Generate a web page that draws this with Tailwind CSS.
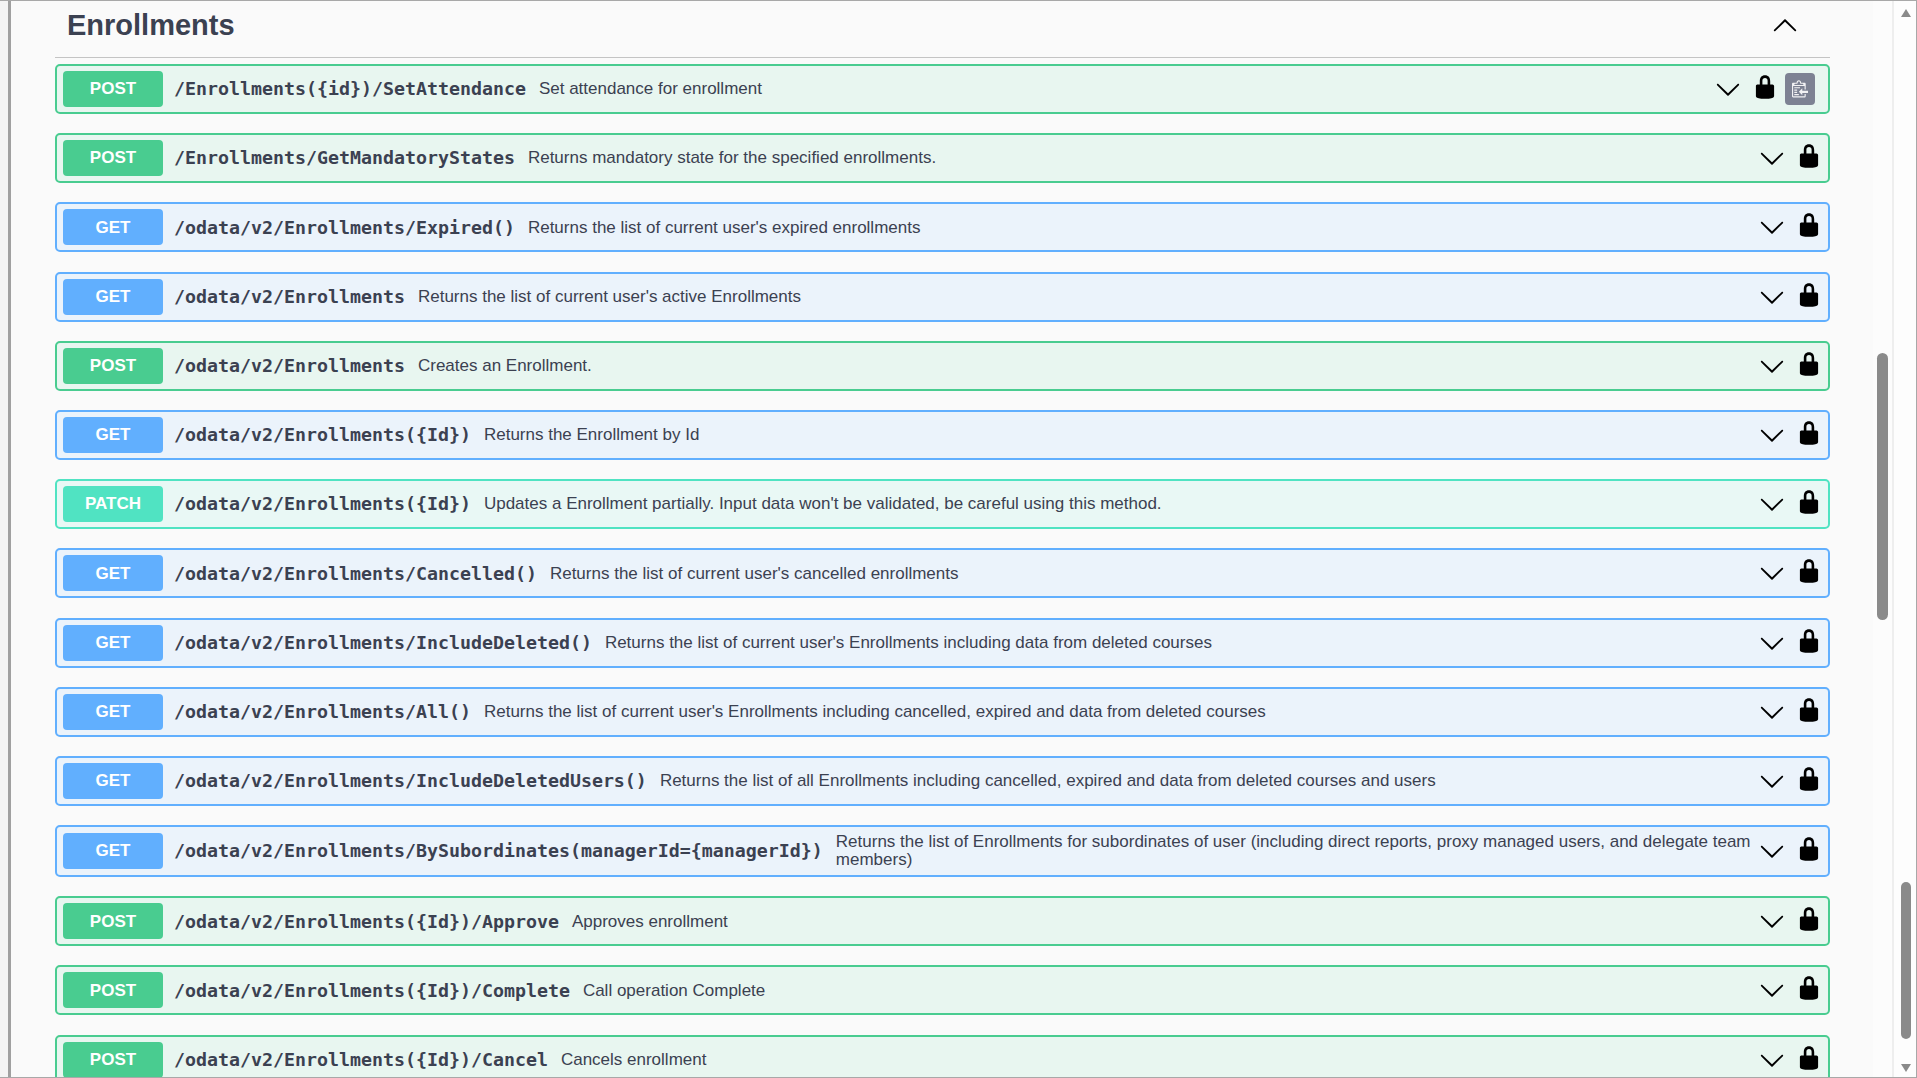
<!DOCTYPE html>
<html lang="en">
<head>
  <meta charset="UTF-8">
  <title>Enrollments</title>
  <script src="https://cdn.jsdelivr.net/npm/@tailwindcss/browser@4"></script>
</head>
<body class="h-[1078px] overflow-hidden flex bg-[#fafafa] border-y border-[#a8a8a8] font-['Liberation_Sans',sans-serif] text-[#3b4151]">
  <svg class="hidden">
    <symbol id="lock" viewBox="0 0 20 20"><path d="M15.8 8H14V5.6C14 2.703 12.665 1 10 1 7.334 1 6 2.703 6 5.6V8H4c-.553 0-1 .646-1 1.199V17c0 .549.428 1.139.951 1.307l1.197.387C5.672 18.861 6.55 19 7.1 19h5.8c.549 0 1.428-.139 1.951-.307l1.196-.387c.524-.167.953-.757.953-1.306V9.199C17 8.646 16.352 8 15.8 8zM12 8H8V5.199C8 3.754 8.797 3 10 3s2 .754 2 2.199V8z"/></symbol>
    <symbol id="arrow" viewBox="0 0 20 20"><path d="M17.418 6.109c.272-.268.709-.268.979 0s.271.701 0 .969l-7.908 7.83c-.27.268-.707.268-.979 0l-7.908-7.83c-.27-.268-.27-.701 0-.969.271-.268.709-.268.979 0L10 13.25l7.418-7.141z"/></symbol>
  </svg>

  <div class="w-[8px] shrink-0 bg-[#f4f4f4]"></div>
  <div class="w-[3px] shrink-0 bg-[#a0a0a0]"></div>

  <main class="w-[1862px] shrink-0 pl-[44px] pr-[43px]">
    <div class="h-[57px] flex items-center justify-between border-b border-[#c4c4c4] pl-[12px] pr-[32px] pb-[7px]">
      <h2 class="text-[29px] font-bold">Enrollments</h2>
      <svg class="w-[26px] h-[26px] rotate-180"><use href="#arrow"/></svg>
    </div>

    <div class="mt-[6px] flex flex-col gap-[19.2px]">
      <div class="h-[50px] flex items-center pl-[6px] pr-[13px] rounded-[5px] border-2 border-[#49cc90] bg-[#e8f6f0]">
        <span class="w-[100px] h-[36px] shrink-0 flex items-center justify-center rounded-[4px] bg-[#49cc90] text-white text-[17px] font-bold">POST</span>
        <span class="ml-[11px] shrink-0 font-['DejaVu_Sans_Mono',monospace] font-bold text-[18.27px]">/Enrollments({id})/SetAttendance</span>
        <span class="ml-[13px] flex-1 text-[17px]">Set attendance for enrollment</span>
        <svg class="w-[26px] h-[26px] shrink-0"><use href="#arrow"/></svg>
        <svg class="w-[26px] h-[26px] shrink-0 ml-[11px] -mt-[4px]"><use href="#lock"/></svg>
        <span class="w-[30px] h-[32px] shrink-0 ml-[7px] flex items-center justify-center rounded-[4px] bg-[#7d8293]">
          <svg class="w-[16px] h-[19px] fill-[#f2f2f4]" viewBox="0 0 14 16"><path d="M2 12h4v1H2v-1zm5-6H2v1h5V6zm2 3V7l-3 3 3 3v-2h5V9H9zM4.5 8H2v1h2.5V8zM2 11h2.5v-1H2v1zm9 1h1v2c-.02.28-.11.52-.3.7-.19.18-.42.28-.7.3H1c-.55 0-1-.45-1-1V3c0-.55.45-1 1-1h3c0-1.11.89-2 2-2 1.11 0 2 .89 2 2h3c.55 0 1 .45 1 1v5h-1V5H1v9h10v-2zM2 4h8c0-.55-.45-1-1-1H8c-.55 0-1-.45-1-1s-.45-1-1-1-1 .45-1 1-.45 1-1 1H3c-.55 0-1 .45-1 1z"/></svg>
        </span>
      </div>

      <div class="h-[50px] flex items-center pl-[6px] pr-[6px] rounded-[5px] border-2 border-[#49cc90] bg-[#e8f6f0]">
        <span class="w-[100px] h-[36px] shrink-0 flex items-center justify-center rounded-[4px] bg-[#49cc90] text-white text-[17px] font-bold">POST</span>
        <span class="ml-[11px] shrink-0 font-['DejaVu_Sans_Mono',monospace] font-bold text-[18.27px]">/Enrollments/GetMandatoryStates</span>
        <span class="ml-[13px] flex-1 text-[17px]">Returns mandatory state for the specified enrollments.</span>
        <svg class="w-[26px] h-[26px] shrink-0"><use href="#arrow"/></svg>
        <svg class="w-[26px] h-[26px] shrink-0 ml-[11px] -mt-[4px]"><use href="#lock"/></svg>
      </div>

      <div class="h-[50px] flex items-center pl-[6px] pr-[6px] rounded-[5px] border-2 border-[#61affe] bg-[#ebf3fb]">
        <span class="w-[100px] h-[36px] shrink-0 flex items-center justify-center rounded-[4px] bg-[#61affe] text-white text-[17px] font-bold">GET</span>
        <span class="ml-[11px] shrink-0 font-['DejaVu_Sans_Mono',monospace] font-bold text-[18.27px]">/odata/v2/Enrollments/Expired()</span>
        <span class="ml-[13px] flex-1 text-[17px]">Returns the list of current user's expired enrollments</span>
        <svg class="w-[26px] h-[26px] shrink-0"><use href="#arrow"/></svg>
        <svg class="w-[26px] h-[26px] shrink-0 ml-[11px] -mt-[4px]"><use href="#lock"/></svg>
      </div>

      <div class="h-[50px] flex items-center pl-[6px] pr-[6px] rounded-[5px] border-2 border-[#61affe] bg-[#ebf3fb]">
        <span class="w-[100px] h-[36px] shrink-0 flex items-center justify-center rounded-[4px] bg-[#61affe] text-white text-[17px] font-bold">GET</span>
        <span class="ml-[11px] shrink-0 font-['DejaVu_Sans_Mono',monospace] font-bold text-[18.27px]">/odata/v2/Enrollments</span>
        <span class="ml-[13px] flex-1 text-[17px]">Returns the list of current user's active Enrollments</span>
        <svg class="w-[26px] h-[26px] shrink-0"><use href="#arrow"/></svg>
        <svg class="w-[26px] h-[26px] shrink-0 ml-[11px] -mt-[4px]"><use href="#lock"/></svg>
      </div>

      <div class="h-[50px] flex items-center pl-[6px] pr-[6px] rounded-[5px] border-2 border-[#49cc90] bg-[#e8f6f0]">
        <span class="w-[100px] h-[36px] shrink-0 flex items-center justify-center rounded-[4px] bg-[#49cc90] text-white text-[17px] font-bold">POST</span>
        <span class="ml-[11px] shrink-0 font-['DejaVu_Sans_Mono',monospace] font-bold text-[18.27px]">/odata/v2/Enrollments</span>
        <span class="ml-[13px] flex-1 text-[17px]">Creates an Enrollment.</span>
        <svg class="w-[26px] h-[26px] shrink-0"><use href="#arrow"/></svg>
        <svg class="w-[26px] h-[26px] shrink-0 ml-[11px] -mt-[4px]"><use href="#lock"/></svg>
      </div>

      <div class="h-[50px] flex items-center pl-[6px] pr-[6px] rounded-[5px] border-2 border-[#61affe] bg-[#ebf3fb]">
        <span class="w-[100px] h-[36px] shrink-0 flex items-center justify-center rounded-[4px] bg-[#61affe] text-white text-[17px] font-bold">GET</span>
        <span class="ml-[11px] shrink-0 font-['DejaVu_Sans_Mono',monospace] font-bold text-[18.27px]">/odata/v2/Enrollments({Id})</span>
        <span class="ml-[13px] flex-1 text-[17px]">Returns the Enrollment by Id</span>
        <svg class="w-[26px] h-[26px] shrink-0"><use href="#arrow"/></svg>
        <svg class="w-[26px] h-[26px] shrink-0 ml-[11px] -mt-[4px]"><use href="#lock"/></svg>
      </div>

      <div class="h-[50px] flex items-center pl-[6px] pr-[6px] rounded-[5px] border-2 border-[#50e3c2] bg-[#e9f8f5]">
        <span class="w-[100px] h-[36px] shrink-0 flex items-center justify-center rounded-[4px] bg-[#50e3c2] text-white text-[17px] font-bold">PATCH</span>
        <span class="ml-[11px] shrink-0 font-['DejaVu_Sans_Mono',monospace] font-bold text-[18.27px]">/odata/v2/Enrollments({Id})</span>
        <span class="ml-[13px] flex-1 text-[17px]">Updates a Enrollment partially. Input data won't be validated, be careful using this method.</span>
        <svg class="w-[26px] h-[26px] shrink-0"><use href="#arrow"/></svg>
        <svg class="w-[26px] h-[26px] shrink-0 ml-[11px] -mt-[4px]"><use href="#lock"/></svg>
      </div>

      <div class="h-[50px] flex items-center pl-[6px] pr-[6px] rounded-[5px] border-2 border-[#61affe] bg-[#ebf3fb]">
        <span class="w-[100px] h-[36px] shrink-0 flex items-center justify-center rounded-[4px] bg-[#61affe] text-white text-[17px] font-bold">GET</span>
        <span class="ml-[11px] shrink-0 font-['DejaVu_Sans_Mono',monospace] font-bold text-[18.27px]">/odata/v2/Enrollments/Cancelled()</span>
        <span class="ml-[13px] flex-1 text-[17px]">Returns the list of current user's cancelled enrollments</span>
        <svg class="w-[26px] h-[26px] shrink-0"><use href="#arrow"/></svg>
        <svg class="w-[26px] h-[26px] shrink-0 ml-[11px] -mt-[4px]"><use href="#lock"/></svg>
      </div>

      <div class="h-[50px] flex items-center pl-[6px] pr-[6px] rounded-[5px] border-2 border-[#61affe] bg-[#ebf3fb]">
        <span class="w-[100px] h-[36px] shrink-0 flex items-center justify-center rounded-[4px] bg-[#61affe] text-white text-[17px] font-bold">GET</span>
        <span class="ml-[11px] shrink-0 font-['DejaVu_Sans_Mono',monospace] font-bold text-[18.27px]">/odata/v2/Enrollments/IncludeDeleted()</span>
        <span class="ml-[13px] flex-1 text-[17px]">Returns the list of current user's Enrollments including data from deleted courses</span>
        <svg class="w-[26px] h-[26px] shrink-0"><use href="#arrow"/></svg>
        <svg class="w-[26px] h-[26px] shrink-0 ml-[11px] -mt-[4px]"><use href="#lock"/></svg>
      </div>

      <div class="h-[50px] flex items-center pl-[6px] pr-[6px] rounded-[5px] border-2 border-[#61affe] bg-[#ebf3fb]">
        <span class="w-[100px] h-[36px] shrink-0 flex items-center justify-center rounded-[4px] bg-[#61affe] text-white text-[17px] font-bold">GET</span>
        <span class="ml-[11px] shrink-0 font-['DejaVu_Sans_Mono',monospace] font-bold text-[18.27px]">/odata/v2/Enrollments/All()</span>
        <span class="ml-[13px] flex-1 text-[17px]">Returns the list of current user's Enrollments including cancelled, expired and data from deleted courses</span>
        <svg class="w-[26px] h-[26px] shrink-0"><use href="#arrow"/></svg>
        <svg class="w-[26px] h-[26px] shrink-0 ml-[11px] -mt-[4px]"><use href="#lock"/></svg>
      </div>

      <div class="h-[50px] flex items-center pl-[6px] pr-[6px] rounded-[5px] border-2 border-[#61affe] bg-[#ebf3fb]">
        <span class="w-[100px] h-[36px] shrink-0 flex items-center justify-center rounded-[4px] bg-[#61affe] text-white text-[17px] font-bold">GET</span>
        <span class="ml-[11px] shrink-0 font-['DejaVu_Sans_Mono',monospace] font-bold text-[18.27px]">/odata/v2/Enrollments/IncludeDeletedUsers()</span>
        <span class="ml-[13px] flex-1 text-[17px]">Returns the list of all Enrollments including cancelled, expired and data from deleted courses and users</span>
        <svg class="w-[26px] h-[26px] shrink-0"><use href="#arrow"/></svg>
        <svg class="w-[26px] h-[26px] shrink-0 ml-[11px] -mt-[4px]"><use href="#lock"/></svg>
      </div>

      <div class="h-[52px] flex items-center pl-[6px] pr-[6px] rounded-[5px] border-2 border-[#61affe] bg-[#ebf3fb]">
        <span class="w-[100px] h-[36px] shrink-0 flex items-center justify-center rounded-[4px] bg-[#61affe] text-white text-[17px] font-bold">GET</span>
        <span class="ml-[11px] shrink-0 font-['DejaVu_Sans_Mono',monospace] font-bold text-[18.27px]">/odata/v2/Enrollments/BySubordinates(managerId={managerId})</span>
        <span class="ml-[13px] flex-1 text-[17px] leading-[18.5px]">Returns the list of Enrollments for subordinates of user (including direct reports, proxy managed users, and delegate team members)</span>
        <svg class="w-[26px] h-[26px] shrink-0"><use href="#arrow"/></svg>
        <svg class="w-[26px] h-[26px] shrink-0 ml-[11px] -mt-[4px]"><use href="#lock"/></svg>
      </div>

      <div class="h-[50px] flex items-center pl-[6px] pr-[6px] rounded-[5px] border-2 border-[#49cc90] bg-[#e8f6f0]">
        <span class="w-[100px] h-[36px] shrink-0 flex items-center justify-center rounded-[4px] bg-[#49cc90] text-white text-[17px] font-bold">POST</span>
        <span class="ml-[11px] shrink-0 font-['DejaVu_Sans_Mono',monospace] font-bold text-[18.27px]">/odata/v2/Enrollments({Id})/Approve</span>
        <span class="ml-[13px] flex-1 text-[17px]">Approves enrollment</span>
        <svg class="w-[26px] h-[26px] shrink-0"><use href="#arrow"/></svg>
        <svg class="w-[26px] h-[26px] shrink-0 ml-[11px] -mt-[4px]"><use href="#lock"/></svg>
      </div>

      <div class="h-[50px] flex items-center pl-[6px] pr-[6px] rounded-[5px] border-2 border-[#49cc90] bg-[#e8f6f0]">
        <span class="w-[100px] h-[36px] shrink-0 flex items-center justify-center rounded-[4px] bg-[#49cc90] text-white text-[17px] font-bold">POST</span>
        <span class="ml-[11px] shrink-0 font-['DejaVu_Sans_Mono',monospace] font-bold text-[18.27px]">/odata/v2/Enrollments({Id})/Complete</span>
        <span class="ml-[13px] flex-1 text-[17px]">Call operation Complete</span>
        <svg class="w-[26px] h-[26px] shrink-0"><use href="#arrow"/></svg>
        <svg class="w-[26px] h-[26px] shrink-0 ml-[11px] -mt-[4px]"><use href="#lock"/></svg>
      </div>

      <div class="h-[50px] flex items-center pl-[6px] pr-[6px] rounded-[5px] border-2 border-[#49cc90] bg-[#e8f6f0]">
        <span class="w-[100px] h-[36px] shrink-0 flex items-center justify-center rounded-[4px] bg-[#49cc90] text-white text-[17px] font-bold">POST</span>
        <span class="ml-[11px] shrink-0 font-['DejaVu_Sans_Mono',monospace] font-bold text-[18.27px]">/odata/v2/Enrollments({Id})/Cancel</span>
        <span class="ml-[13px] flex-1 text-[17px]">Cancels enrollment</span>
        <svg class="w-[26px] h-[26px] shrink-0"><use href="#arrow"/></svg>
        <svg class="w-[26px] h-[26px] shrink-0 ml-[11px] -mt-[4px]"><use href="#lock"/></svg>
      </div>
    </div>
  </main>

  <!-- inner scrollbar -->
  <div class="w-[19px] shrink-0 bg-[#fcfcfc] pl-[4px] pt-[352px]">
    <div class="w-[11px] h-[267px] rounded-full bg-[#8a8a8a]"></div>
  </div>
  <div class="w-[2px] shrink-0 bg-[#eeeeee]"></div>

  <!-- outer scrollbar -->
  <div class="w-[22px] shrink-0 bg-[#fdfdfd] flex flex-col items-center pl-[1px] pt-[8px] pb-[5px]">
    <span class="w-0 h-0 border-x-[5px] border-x-transparent border-b-[8px] border-b-[#8a8a8a]"></span>
    <div class="w-[10px] h-[157px] mt-[865px] rounded-full bg-[#8a8a8a]"></div>
    <span class="mt-auto w-0 h-0 border-x-[5px] border-x-transparent border-t-[8px] border-t-[#8a8a8a]"></span>
  </div>
  <div class="w-[1px] shrink-0 bg-[#a8a8a8]"></div>
</body>
</html>
